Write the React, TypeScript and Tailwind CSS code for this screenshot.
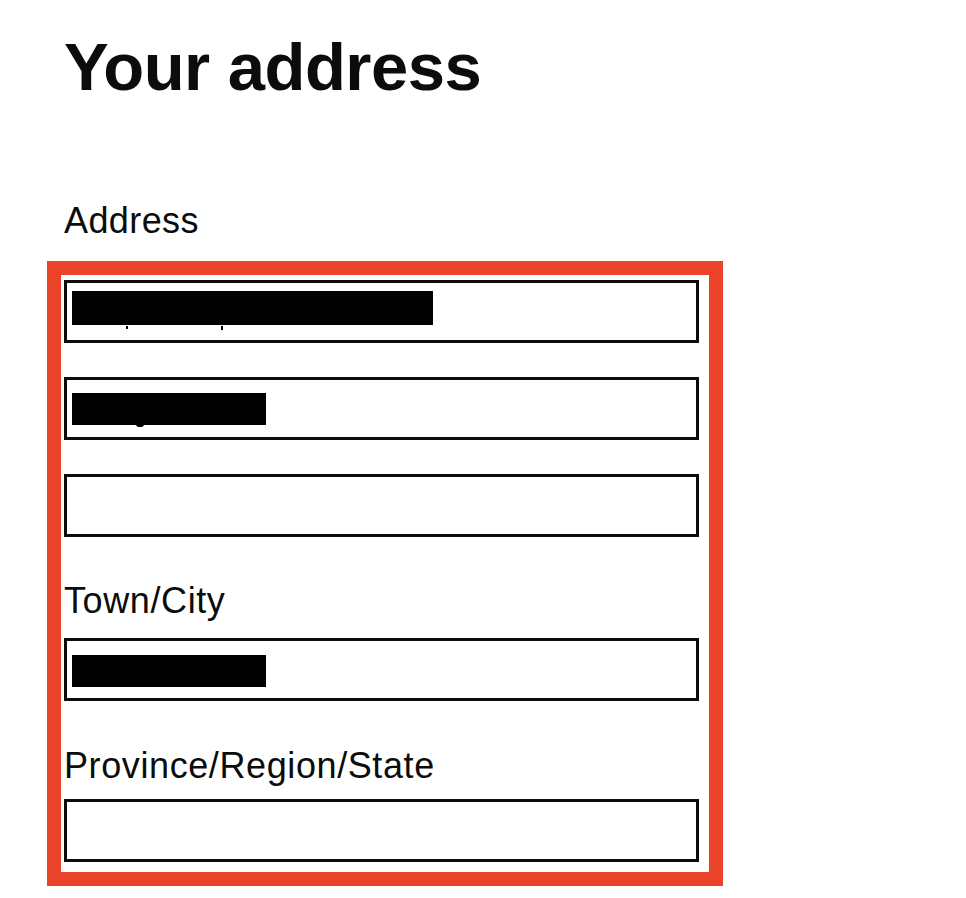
const font = { fontFamily: '"Liberation Sans", Arial, sans-serif' };

function Field({ redact, children }: { redact?: string; children?: React.ReactNode }) {
  return (
    <div className="relative h-[63px] w-[635px] border-[3px] border-[#0b0c0c] bg-white">
      {redact && <div className={redact} />}
      {children}
    </div>
  );
}

export default function App() {
  return (
    <div className="h-[898px] w-[966px] bg-white text-[#0b0c0c]" style={font}>
      <h1 className="ml-[64px] pt-[33px] text-[67px] font-bold leading-none tracking-[-0.5px]">
        Your address
      </h1>
      <label className="ml-[64px] mt-[101px] block h-[40px] text-[36px] leading-[40px] tracking-[0.4px]">
        Address
      </label>

      <div className="ml-[47px] mt-[20px] w-[676px] border-[14px] border-[#e9432a] pb-[10px] pl-[3px] pr-[10px] pt-[5px]">
        <div className="flex flex-col gap-[34px]">
          <Field redact="ml-[5px] mt-[8px] h-[34px] w-[361px] bg-black">
            <span className="absolute left-[59px] top-[43px] h-[3px] w-[2px] bg-black" />
            <span className="absolute left-[154px] top-[43px] h-[4px] w-[2px] bg-black" />
          </Field>
          <Field redact="ml-[5px] mt-[13px] h-[32px] w-[194px] bg-black">
            <span className="absolute left-[69px] top-[44px] h-[3px] w-[8px] rounded-b-full bg-black" />
          </Field>
          <Field />
        </div>

        <label className="mt-[44px] block h-[40px] text-[36px] leading-[40px] tracking-[0.6px]">Town/City</label>
        <div className="mt-[17px]">
          <Field redact="ml-[5px] mt-[14px] h-[32px] w-[194px] bg-black" />
        </div>

        <label className="mt-[45px] block h-[40px] text-[36px] leading-[40px] tracking-[0.6px]">
          Province/Region/State
        </label>
        <div className="mt-[13px]">
          <Field />
        </div>
      </div>
    </div>
  );
}
